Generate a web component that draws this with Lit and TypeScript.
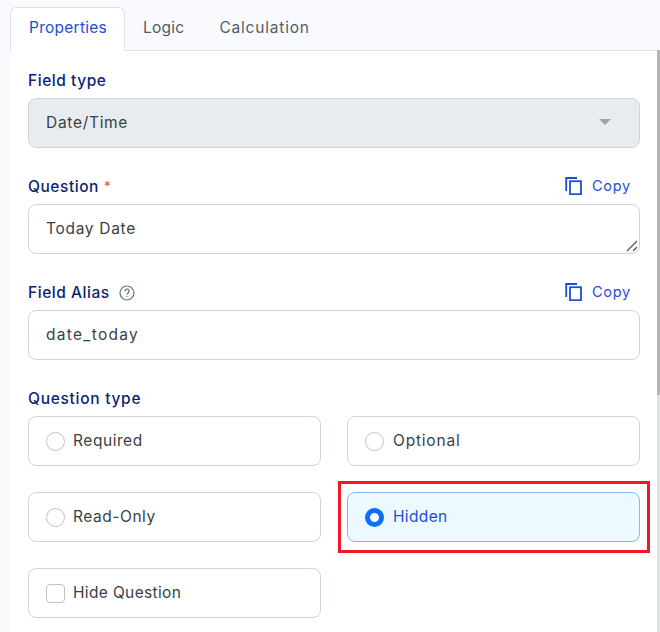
import { LitElement, html, css, svg } from "lit";
import { customElement } from "lit/decorators.js";

const copyIcon = svg`<svg class="copy-ic" width="18" height="18" viewBox="0 0 18 18" fill="none" stroke="#1d4ed8" stroke-width="1.8"><path d="M12 1H1.2V14"/><rect x="5" y="4.2" width="11" height="13"/></svg>`;

@customElement("app-root")
export class AppRoot extends LitElement {
  static styles = css`
    :host { display: block; width: 660px; height: 632px; overflow: hidden; position: relative; background: #f9fafe; font-family: Inter, "Open Sans", sans-serif; font-size: 15.5px; color: #3a3f45; letter-spacing: 0.55px; }
    * { box-sizing: border-box; }
    .shell { padding: 7px 3px 0 10px; height: 632px; display: flex; flex-direction: column; }
    .tabs { display: flex; height: 44px; border-bottom: 1px solid #dee2e6; flex: none; }
    .tab { height: 44px; padding: 0 18px 3px; display: flex; align-items: center; color: #565c63; letter-spacing: 0.25px; }
    .tab.logic { padding-right: 17px; }
    .tab.calc { letter-spacing: 0.8px; }
    .tab.active { color: #1d4ed8; background: #fff; border: 1px solid #dee2e6; border-bottom-color: #fff; border-radius: 6px 6px 0 0; width: 115px; }
    .panel { background: #fff; flex: 1; padding: 19px 17px 0 18px; display: flex; flex-direction: column; }
    .label-row { height: 20px; display: flex; align-items: center; gap: 10px; margin-bottom: 8px; }
    .label { color: #0b1f74; font-weight: 500; letter-spacing: 0.55px; }
    .label.wide { letter-spacing: 0.72px; }
    .req { color: #ef4058; font-size: 13px; margin-left: -5px; }
    .help { margin-top: 1px; margin-left: -1px; }
    .copy { margin-left: auto; display: flex; align-items: center; gap: 9px; color: #1d4ed8; font-size: 14.5px; padding-right: 9px; letter-spacing: 0.75px; }
    .copy span { margin-top: -2px; }
    .control { height: 50px; border: 1px solid #ced4da; border-radius: 8px; padding: 0 17px 2px; display: flex; align-items: center; background: #fff; margin-bottom: 28px; position: relative; }
    .control.select { background: #e9ecef; justify-content: space-between; }
    .dt { letter-spacing: 0.7px; }
    .alias { letter-spacing: 1.3px; }
    .caret { width: 0; height: 0; border-left: 6px solid transparent; border-right: 6px solid transparent; border-top: 6px solid #9ca3af; margin-right: 11px; }
    .resize { position: absolute; right: 1px; bottom: 1px; }
    .grid { display: grid; grid-template-columns: 293px 293px; column-gap: 26px; row-gap: 26px; }
    .opt { height: 50px; border: 1px solid #ced4da; border-radius: 8px; padding: 0 17px; display: flex; align-items: center; gap: 8px; background: #fff; }
    .opt span.t { margin-top: -2px; }
    .opt.on { background: #ecfaff; border-color: #86b7f5; color: #1d4ed8; letter-spacing: 0.35px; }
    .t.tight { letter-spacing: 0.35px; }
    .t.loose { letter-spacing: 0.8px; margin-left: 1px; }
    .t.shift { margin-left: 1px; }
    .radio { width: 19px; height: 19px; border: 1px solid #bfc3c8; border-radius: 50%; flex: none; background: #fff; }
    .radio.on { border: 5.5px solid #0d6efd; }
    .check { width: 19px; height: 19px; border: 1px solid #bfc3c8; border-radius: 4px; flex: none; }
    .mark { position: absolute; left: 338px; top: 481px; width: 312px; height: 72px; border: 3px solid #ed1c24; pointer-events: none; }
    .sb { position: absolute; right: 0; top: 50px; bottom: 0; width: 3px; background: #dee2e6; }
    .thumb { height: 345px; background: #b4b4b4; }
  `;

  render() {
    return html`
      <div class="shell">
        <div class="tabs">
          <div class="tab active">Properties</div>
          <div class="tab logic">Logic</div>
          <div class="tab calc">Calculation</div>
        </div>
        <div class="panel">
          <div class="label-row"><span class="label">Field type</span></div>
          <div class="control select"><span class="dt">Date/Time</span><span class="caret"></span></div>
          <div class="label-row"><span class="label">Question</span><span class="req">*</span><span class="copy">${copyIcon}<span>Copy</span></span></div>
          <div class="control"><span class="dt">Today Date</span>
            <svg class="resize" width="12" height="12" viewBox="0 0 12 12" stroke="#555" stroke-width="1.3"><path d="M1 11 11 1M7 11l4-4"/></svg>
          </div>
          <div class="label-row"><span class="label">Field Alias</span>
            <svg class="help" width="16" height="16" viewBox="0 0 16 16" fill="none" stroke="#5f7183" stroke-width="1.2"><circle cx="8" cy="8" r="7"/><path d="M5.9 6.2a2.1 2.1 0 1 1 3.3 1.7c-.8.5-1.2 1-1.2 1.8"/><path d="M8 11.2v1.1"/></svg>
            <span class="copy">${copyIcon}<span>Copy</span></span></div>
          <div class="control"><span class="alias">date_today</span></div>
          <div class="label-row"><span class="label wide">Question type</span></div>
          <div class="grid">
            <div class="opt"><span class="radio"></span><span class="t">Required</span></div>
            <div class="opt"><span class="radio"></span><span class="t loose">Optional</span></div>
            <div class="opt"><span class="radio"></span><span class="t">Read-Only</span></div>
            <div class="opt on"><span class="radio on"></span><span class="t shift">Hidden</span></div>
            <div class="opt"><span class="check"></span><span class="t tight">Hide Question</span></div>
          </div>
        </div>
      </div>
      <div class="sb"><div class="thumb"></div></div>
      <div class="mark"></div>
    `;
  }
}
